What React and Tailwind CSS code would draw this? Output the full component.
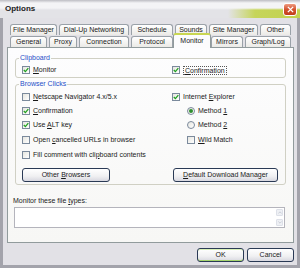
import React from "react";

function Check({ checked, children, focus }) {
  return (
    <div className="flex items-center gap-[3px] h-full">
      <span className="w-[8px] h-[8px] shrink-0 border border-[#7b8a9c] bg-[linear-gradient(135deg,#e6e6e0,#ffffff)] flex items-center justify-center">
        {checked && (
          <svg viewBox="0 0 6 6" className="w-[6px] h-[6px]">
            <path d="M0.8 3 L2.4 4.6 L5.3 1.1" stroke="#21a121" strokeWidth="1.3" fill="none" />
          </svg>
        )}
      </span>
      <span className={focus ? "border border-dotted border-[#555] px-[1px] leading-[7px]" : ""}>{children}</span>
    </div>
  );
}

function Radio({ on, children }) {
  return (
    <div className="flex items-center gap-[3px] h-full">
      <span className="w-[8px] h-[8px] shrink-0 rounded-full border border-[#7b8a9c] bg-[linear-gradient(135deg,#e6e6e0,#ffffff)] flex items-center justify-center">
        {on && <span className="w-[4px] h-[4px] rounded-full bg-[#2f8f2f]" />}
      </span>
      <span>{children}</span>
    </div>
  );
}

function Tab({ w, children, sel }) {
  if (sel) {
    return (
      <div
        className={
          "relative z-10 h-[15px] -mb-[1px] -mx-[2px] flex items-center justify-center rounded-t-[3px] border border-b-0 border-[#919b9c] border-t-[2px] border-t-[#c9d651] bg-[#fcfcfd] pb-[1px] " +
          w
        }
      >
        {children}
      </div>
    );
  }
  return (
    <div
      className={
        "h-[11px] flex items-center justify-center rounded-t-[3px] border border-b-0 border-[#9aa1a8] bg-[linear-gradient(#ffffff,#ebeae6)] " +
        w
      }
    >
      {children}
    </div>
  );
}

function Btn({ w, children, def }) {
  return (
    <div
      className={
        "h-[14px] flex items-center justify-center rounded-[3px] border border-[#2a3a55] bg-[linear-gradient(#ffffff,#f0f0f2_60%,#d8d8e0)] " +
        (def ? "shadow-[inset_0_-1px_0_#a6d46e,inset_0_1px_0_#d8f0b8] " : "") +
        w
      }
    >
      <span>{children}</span>
    </div>
  );
}

export default function App() {
  return (
    <div className="w-[300px] h-[268px] flex flex-col overflow-hidden font-['Liberation_Sans',Arial,sans-serif] text-[7px] leading-[8px] text-[#1a1a1a] bg-[#a3a3ab]">
      {/* Title bar */}
      <div className="h-[18px] shrink-0 flex items-center justify-between pl-[5px] pr-[3px] bg-[linear-gradient(to_bottom,#bdbdc3_0px,#f4f4f6_3px,#f4f4f6_8px,transparent_10px),linear-gradient(to_right,#e3e3e7_0%,#e3e3e7_76%,#c6d55a_85%,#c2d250_100%)]">
        <span className="font-bold text-[8px] text-[#222]">Options</span>
        <div className="w-[14px] h-[13px] rounded-[3px] border border-white bg-[linear-gradient(#ee9a80,#d4532f_50%,#c23e1c)] flex items-center justify-center">
          <svg viewBox="0 0 8 8" className="w-[7px] h-[7px]">
            <path d="M1 1 L7 7 M7 1 L1 7" stroke="#fff" strokeWidth="1.6" />
          </svg>
        </div>
      </div>

      {/* Body */}
      <div className="flex-1 flex flex-col mx-[3px] mb-[3px] bg-[#e2e1e6]">
        {/* Tabs */}
        <div className="pt-[6px] pl-[7px] flex flex-col">
          <div className="flex gap-[2px] h-[11px]">
            <Tab w="w-[47px]">File Manager</Tab>
            <Tab w="w-[70px]">Dial-Up Networking</Tab>
            <Tab w="w-[42px]">Schedule</Tab>
            <Tab w="w-[32px]">Sounds</Tab>
            <Tab w="w-[49px]">Site Manager</Tab>
            <Tab w="w-[31px]">Other</Tab>
          </div>
          <div className="flex gap-[2px] h-[12px] items-end">
            <Tab w="w-[37px]">General</Tab>
            <Tab w="w-[28px]">Proxy</Tab>
            <Tab w="w-[50px]">Connection</Tab>
            <Tab w="w-[42px]">Protocol</Tab>
            <Tab w="w-[38px]" sel>Monitor</Tab>
            <Tab w="w-[32px]">Mirrors</Tab>
            <Tab w="w-[46px]">Graph/Log</Tab>
          </div>
        </div>

        {/* Panel */}
        <div className="ml-[4px] mr-[3px] h-[196px] border border-[#919b9c] bg-[linear-gradient(#fdfdfe,#f7f7f5)] flex flex-col px-[7px]">
          <fieldset className="mt-[6px] border border-[#d0d0c4] rounded-[3px] pb-[2px]">
            <legend className="ml-[3px] px-[1px] text-[#1f4fc8] leading-[8px]">Clipboard</legend>
            <div className="grid grid-cols-[150px_1fr] pl-[6px] pt-[3px]">
              <div className="h-[10px]">
                <Check checked><u>M</u>onitor</Check>
              </div>
              <div className="h-[10px]">
                <Check checked focus><u>C</u>onfirmation</Check>
              </div>
            </div>
          </fieldset>

          <fieldset className="mt-[2px] border border-[#d0d0c4] rounded-[3px] pb-[2px]">
            <legend className="ml-[3px] px-[1px] text-[#1f4fc8] leading-[8px]">Browser Clicks</legend>
            <div className="grid grid-cols-[150px_1fr] pl-[6px] pt-[2px]">
              <div className="flex flex-col">
                <div className="h-[14px]"><Check><u>N</u>etscape Navigator 4.x/5.x</Check></div>
                <div className="h-[14px]"><Check checked><u>C</u>onfirmation</Check></div>
                <div className="h-[14px]"><Check checked>Use <u>A</u>LT key</Check></div>
                <div className="h-[15px]"><Check>Open <u>c</u>ancelled URLs in browser</Check></div>
                <div className="h-[15px]"><Check>Fill comment with cli<u>p</u>board contents</Check></div>
                <div className="mt-[6px]">
                  <Btn w="w-[88px]">Other <u>B</u>rowsers</Btn>
                </div>
              </div>
              <div className="flex flex-col">
                <div className="h-[14px]"><Check checked>Internet <u>E</u>xplorer</Check></div>
                <div className="h-[14px] pl-[15px]"><Radio on>Method <u>1</u></Radio></div>
                <div className="h-[14px] pl-[15px]"><Radio>Method <u>2</u></Radio></div>
                <div className="h-[16px] pl-[15px]"><Check><u>W</u>ild Match</Check></div>
                <div className="h-[14px]" />
                <div className="mt-[6px] ml-[1px]">
                  <Btn w="w-[105px]"><u>D</u>efault Download Manager</Btn>
                </div>
              </div>
            </div>
          </fieldset>

          <div className="mt-[12px] -ml-[2px] h-[8px]">Monitor these file <u>t</u>ypes:</div>
          <div className="mt-[2px] -ml-[1px] w-[271px] h-[21px] border border-[#b4b4bc] bg-white flex justify-end">
            <div className="w-[8px] flex flex-col justify-between py-[1px] pr-[1px]">
              <div className="w-[7px] h-[7px] rounded-[1px] bg-[#eef0f4] border border-[#dde0e8] flex items-center justify-center">
                <svg viewBox="0 0 6 4" className="w-[4px] h-[3px]"><path d="M0.5 3.5 L3 1 L5.5 3.5" stroke="#b8bcc8" strokeWidth="1" fill="none" /></svg>
              </div>
              <div className="w-[7px] h-[7px] rounded-[1px] bg-[#eef0f4] border border-[#dde0e8] flex items-center justify-center">
                <svg viewBox="0 0 6 4" className="w-[4px] h-[3px]"><path d="M0.5 0.5 L3 3 L5.5 0.5" stroke="#b8bcc8" strokeWidth="1" fill="none" /></svg>
              </div>
            </div>
          </div>
        </div>

        {/* Bottom buttons */}
        <div className="mt-[5px] flex justify-end gap-[3px] mr-[3px]">
          <Btn w="w-[47px]" def>OK</Btn>
          <Btn w="w-[47px]">Cancel</Btn>
        </div>
      </div>
    </div>
  );
}
